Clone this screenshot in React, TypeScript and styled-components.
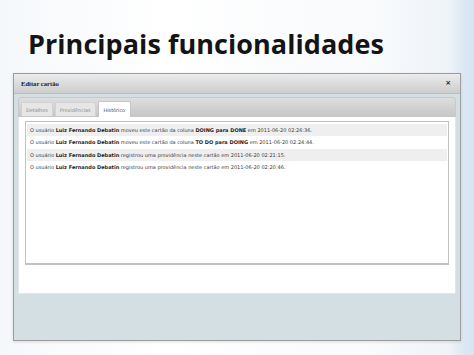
import React from "react";
import styled, { createGlobalStyle } from "styled-components";

const GlobalStyle = createGlobalStyle`
  html, body {
    margin: 0;
    padding: 0;
  }
  body {
    background: linear-gradient(90deg, #f5f8fb 0%, #ffffff 35%, #f8fafc 80%, #eef3f8 95%, #dbe7f3 98%, #d6e4f1 100%);
  }
`;

const Slide = styled.div`
  width: 474px;
  height: 355px;
  overflow: hidden;
  display: flex;
  flex-direction: column;
`;

const Title = styled.h1`
  margin: 30px 0 0 0;
  padding-left: 28px;
  font-family: "Open Sans", "DejaVu Sans", sans-serif;
  font-weight: 700;
  font-size: 27px;
  line-height: 27px;
  letter-spacing: 0.05px;
  color: #141414;
`;

const Dialog = styled.div`
  margin: 16px 0 0 13px;
  width: 448px;
  height: 268px;
  box-sizing: border-box;
  border: 1px solid #9c9c9c;
  background: #d4dfe3;
  display: flex;
  flex-direction: column;
  box-shadow: 0 1px 3px rgba(0, 0, 0, 0.12);
`;

const TitleBar = styled.div`
  height: 19px;
  display: flex;
  align-items: center;
  justify-content: space-between;
  padding: 0 9px 0 7px;
  background: linear-gradient(180deg, #ececec 0%, #dcdcdc 50%, #cdcdcd 100%);
  border-bottom: 1px solid #bdbdbd;
`;

const DialogTitle = styled.span`
  font-family: "Liberation Serif", "DejaVu Serif", serif;
  font-weight: 700;
  font-size: 6.6px;
  color: #1e1e1e;
`;

const Close = styled.span`
  font-family: "DejaVu Sans", sans-serif;
  font-weight: 700;
  font-size: 7px;
  line-height: 7px;
  color: #222;
`;

const Body = styled.div`
  flex: 1;
  padding: 3px 4px 0 4px;
  display: flex;
  flex-direction: column;
`;

const Panel = styled.div`
  height: 197px;
  background: #ffffff;
  border-radius: 3px 3px 0 0;
  display: flex;
  flex-direction: column;
  box-shadow: inset 0 0 0 1px #e2e6e8;
`;

const TabBar = styled.div`
  height: 20px;
  box-sizing: border-box;
  display: flex;
  align-items: flex-end;
  gap: 2px;
  padding-left: 2px;
  border-radius: 3px 3px 0 0;
  background: linear-gradient(180deg, #dedede 0%, #cfcfcf 60%, #c6c6c6 100%);
  border: 1px solid #c9c9c9;
  border-bottom: none;
`;

const Tab = styled.div<{ $active?: boolean }>`
  height: ${(p) => (p.$active ? 16 : 14)}px;
  box-sizing: border-box;
  padding: 0 ${(p) => (p.$active ? 5 : 4)}px;
  margin-bottom: ${(p) => (p.$active ? 0 : 1)}px;
  display: flex;
  align-items: center;
  font-family: "DejaVu Sans", sans-serif;
  font-size: 4.9px;
  color: ${(p) => (p.$active ? "#444" : "#8a8a8a")};
  background: ${(p) => (p.$active ? "#ffffff" : "#e6e6e6")};
  border: 1px solid ${(p) => (p.$active ? "#c4c4c4" : "#d2d2d2")};
  border-bottom: none;
  border-radius: 2px 2px 0 0;
`;

const Content = styled.div`
  padding: 4px 7px 0 7px;
`;

const ListBox = styled.div`
  height: 144px;
  box-sizing: border-box;
  border: 1px solid #c2c2c2;
  border-bottom-width: 2px;
  padding: 2px 1px;
  background: #fff;
`;

const Row = styled.div<{ $striped?: boolean }>`
  height: 12.33px;
  line-height: 12.33px;
  padding-left: 3px;
  background: ${(p) => (p.$striped ? "#efefef" : "transparent")};
  font-family: "DejaVu Sans", sans-serif;
  font-size: 5px;
  color: #3a3a3a;
  white-space: nowrap;

  b {
    font-weight: 700;
    color: #1e1e1e;
  }
`;

const rows = [
  { action: "moveu este cartão da coluna ", bold2: "DOING para DONE", date: "2011-06-20 02:26:36." },
  { action: "moveu este cartão da coluna ", bold2: "TO DO para DOING", date: "2011-06-20 02:24:44." },
  { action: "registrou uma providência neste cartão", bold2: "", date: "2011-06-20 02:21:15." },
  { action: "registrou uma providência neste cartão", bold2: "", date: "2011-06-20 02:20:46." },
];

export default function App() {
  return (
    <>
      <GlobalStyle />
      <Slide>
        <Title>Principais funcionalidades</Title>
        <Dialog>
          <TitleBar>
            <DialogTitle>Editar cartão</DialogTitle>
            <Close>×</Close>
          </TitleBar>
          <Body>
            <Panel>
              <TabBar>
                <Tab>Detalhes</Tab>
                <Tab>Providências</Tab>
                <Tab $active>Histórico</Tab>
              </TabBar>
              <Content>
                <ListBox>
                  {rows.map((r, i) => (
                    <Row key={i} $striped={i % 2 === 0}>
                      O usuário <b>Luiz Fernando Debatin</b> {r.action}
                      {r.bold2 && <b>{r.bold2}</b>} em {r.date}
                    </Row>
                  ))}
                </ListBox>
              </Content>
            </Panel>
          </Body>
        </Dialog>
      </Slide>
    </>
  );
}
